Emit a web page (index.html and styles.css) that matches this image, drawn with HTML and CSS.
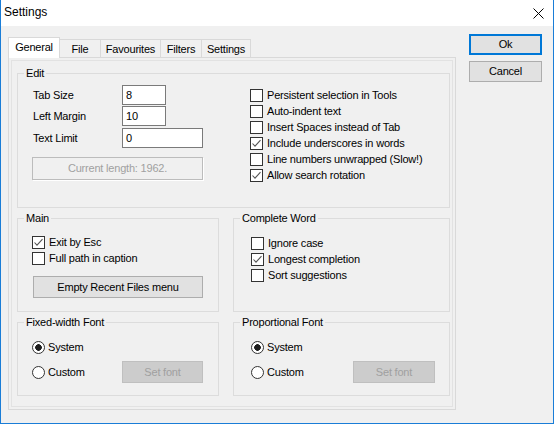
FILE: index.html
```html
<!DOCTYPE html>
<html>
<head>
<meta charset="utf-8">
<title>Settings</title>
<link rel="stylesheet" href="styles.css">
</head>
<body>
<div class="window">
  <div class="titlebar">
    <span class="title">Settings</span>
    <svg class="close" width="11" height="11" viewBox="0 0 11 11"><path d="M0.5 0.5L10.5 10.5M10.5 0.5L0.5 10.5" stroke="#000" stroke-width="1" fill="none"/></svg>
  </div>
  <div class="client">
    <div class="tabctl">
      <div class="tabs">
        <div class="tab active w-general">General</div>
        <div class="tab w-file">File</div>
        <div class="tab w-fav">Favourites</div>
        <div class="tab w-filters">Filters</div>
        <div class="tab w-settings">Settings</div>
      </div>
      <div class="panel">
        <div class="sheet">
          <div class="group g-edit">
            <div class="gtitle">Edit</div>
            <div class="edit-body">
              <div class="edit-left">
                <div class="field"><span class="flabel">Tab Size</span><span class="input w-s">8</span></div>
                <div class="field f2"><span class="flabel">Left Margin</span><span class="input w-s">10</span></div>
                <div class="field f3"><span class="flabel">Text Limit</span><span class="input w-l">0</span></div>
                <div class="static">Current length: 1962.</div>
              </div>
              <div class="edit-right">
                <div class="chk"><span class="box"></span>Persistent selection in Tools</div>
                <div class="chk"><span class="box"></span>Auto-indent text</div>
                <div class="chk"><span class="box"></span>Insert Spaces instead of Tab</div>
                <div class="chk"><span class="box"><svg width="11" height="11" viewBox="0 0 11 11"><path d="M1.5 5.5L4 8.2L9.5 2.2" stroke="#555" stroke-width="1.1" fill="none"/></svg></span>Include underscores in words</div>
                <div class="chk"><span class="box"></span>Line numbers unwrapped (Slow!)</div>
                <div class="chk"><span class="box"><svg width="11" height="11" viewBox="0 0 11 11"><path d="M1.5 5.5L4 8.2L9.5 2.2" stroke="#555" stroke-width="1.1" fill="none"/></svg></span>Allow search rotation</div>
              </div>
            </div>
          </div>
          <div class="lower">
            <div class="group g-main pad-l">
              <div class="gtitle">Main</div>
              <div class="rows r-main">
                <div class="chk"><span class="box"><svg width="11" height="11" viewBox="0 0 11 11"><path d="M1.5 5.5L4 8.2L9.5 2.2" stroke="#555" stroke-width="1.1" fill="none"/></svg></span>Exit by Esc</div>
                <div class="chk"><span class="box"></span>Full path in caption</div>
              </div>
              <div class="btn wide">Empty Recent Files menu</div>
            </div>
            <div class="group g-main pad-r">
              <div class="gtitle">Complete Word</div>
              <div class="rows r-word">
                <div class="chk"><span class="box"></span>Ignore case</div>
                <div class="chk"><span class="box"><svg width="11" height="11" viewBox="0 0 11 11"><path d="M1.5 5.5L4 8.2L9.5 2.2" stroke="#555" stroke-width="1.1" fill="none"/></svg></span>Longest completion</div>
                <div class="chk"><span class="box"></span>Sort suggestions</div>
              </div>
            </div>
            <div class="group g-font pad-l">
              <div class="gtitle">Fixed-width Font</div>
              <div class="rad first"><span class="circle on"></span>System</div>
              <div class="font-row">
                <div class="rad lab-fixed"><span class="circle"></span>Custom</div>
                <div class="btn disabled bw-fixed">Set font</div>
              </div>
            </div>
            <div class="group g-font pad-r">
              <div class="gtitle">Proportional Font</div>
              <div class="rad first"><span class="circle on"></span>System</div>
              <div class="font-row">
                <div class="rad lab-prop"><span class="circle"></span>Custom</div>
                <div class="btn disabled bw-prop">Set font</div>
              </div>
            </div>
          </div>
        </div>
      </div>
    </div>
    <div class="buttons">
      <div class="btn dlg default">Ok</div>
      <div class="btn dlg cancel">Cancel</div>
    </div>
  </div>
</div>
</body>
</html>
```

FILE: styles.css
```css
html, body {
  margin: 0;
  padding: 0;
  background: #f0f0f0;
}

.window {
  width: 554px;
  height: 424px;
  box-sizing: border-box;
  border: 1px solid #1a7dd7;
  border-top: none;
  background: #f0f0f0;
  font-family: "Liberation Sans", Arial, sans-serif;
  font-size: 11px;
  letter-spacing: -0.2px;
  color: #000;
  overflow: hidden;
}

.titlebar {
  height: 26px;
  background: #fff;
  display: flex;
  align-items: flex-start;
}

.title {
  font-size: 12px;
  letter-spacing: 0;
  line-height: 24px;
  margin-left: 3px;
}

.close {
  margin-left: auto;
  margin-right: 9px;
  margin-top: 8px;
  display: block;
}

.client {
  display: flex;
  padding: 11px 0 0 7px;
}

.tabctl {
  width: 448px;
}

.tabs {
  display: flex;
  align-items: flex-end;
  height: 20px;
}

.tab {
  box-sizing: border-box;
  height: 18px;
  border-top: 1px solid #d9d9d9;
  border-right: 1px solid #d9d9d9;
  background: #f0f0f0;
  text-align: center;
  line-height: 17px;
  padding-top: 1px;
}

.tab.active {
  position: relative;
  z-index: 1;
  height: 21px;
  margin-bottom: -1px;
  border-left: 1px solid #d9d9d9;
  background: #fff;
  line-height: 19px;
  padding-top: 0;
}

.w-general { width: 52px; }
.w-file { width: 41px; }
.w-fav { width: 60px; }
.w-filters { width: 41px; }
.w-settings { width: 49px; }

.panel {
  height: 353px;
  box-sizing: border-box;
  border: 1px solid #d9d9d9;
  padding: 2px;
}

.sheet {
  height: 100%;
  box-sizing: border-box;
  border: 1px solid #e2e2e2;
  padding: 12px 2px 0 5px;
}

.group {
  box-sizing: border-box;
  border: 1px solid #dcdcdc;
}

.gtitle {
  margin: -8px 0 0 6px;
  padding: 0 2px;
  width: fit-content;
  background: #f0f0f0;
  line-height: 14px;
}

.g-edit {
  height: 135px;
}

.edit-body {
  display: flex;
}

.edit-left {
  box-sizing: border-box;
  width: 232px;
  padding-left: 15px;
  margin-top: 5px;
}

.field {
  display: flex;
  align-items: center;
  height: 20px;
}

.f2 { margin-top: 1px; }
.f3 { margin-top: 2px; }

.flabel {
  width: 89px;
}

.input {
  box-sizing: border-box;
  height: 20px;
  border: 1px solid #7a7a7a;
  background: #fff;
  padding-left: 3px;
  line-height: 18px;
}

.w-s { width: 44px; }
.w-l { width: 81px; }

.static {
  box-sizing: border-box;
  width: 171px;
  height: 23px;
  margin: 9px 0 0 -1px;
  border: 1px solid #bcbcbc;
  box-shadow: 1px 1px 0 #fff;
  text-align: center;
  line-height: 21px;
  color: #a0a0a0;
}

.edit-right {
  margin-top: 7px;
}

.chk, .rad {
  display: flex;
  align-items: center;
  height: 16px;
}

.box {
  box-sizing: border-box;
  width: 13px;
  height: 13px;
  border: 1px solid #333;
  background: #fff;
  margin-right: 4px;
  flex: none;
  display: flex;
}

.circle {
  box-sizing: border-box;
  width: 13px;
  height: 13px;
  border: 1px solid #333;
  border-radius: 50%;
  background: #fff;
  margin-right: 3px;
  flex: none;
}

.circle.on {
  background: radial-gradient(circle, #1e1e1e 0, #1e1e1e 3px, #fff 3.6px);
}

.lower {
  display: grid;
  grid-template-columns: 202px 217px;
  column-gap: 14px;
  row-gap: 10px;
  margin-top: 10px;
}

.pad-l { padding-left: 14px; }
.pad-r { padding-left: 17px; }

.pad-l .gtitle { margin-left: -8px; }
.pad-r .gtitle { margin-left: -11px; }

.g-main { height: 94px; }
.g-font { height: 74px; }

.r-main { margin-top: 9px; }
.r-word { margin-top: 10px; }

.btn {
  box-sizing: border-box;
  border: 1px solid #adadad;
  background: #e1e1e1;
  text-align: center;
}

.wide {
  width: 170px;
  height: 22px;
  line-height: 20px;
  margin: 10px 0 0 1px;
}

.rad.first { margin-top: 10px; }

.font-row {
  display: flex;
  align-items: center;
  height: 22px;
  margin-top: 6px;
}

.lab-fixed { width: 90px; }
.lab-prop { width: 102px; }

.disabled {
  height: 22px;
  line-height: 20px;
  background: #cccccc;
  border-color: #bfbfbf;
  color: #a0a0a0;
}

.bw-fixed { width: 81px; }
.bw-prop { width: 82px; }

.buttons {
  margin: -3px 0 0 13px;
  width: 73px;
}

.dlg {
  width: 73px;
  height: 21px;
  line-height: 19px;
}

.default {
  border: 2px solid #0078d7;
  line-height: 17px;
}

.cancel {
  margin-top: 6px;
}
```
